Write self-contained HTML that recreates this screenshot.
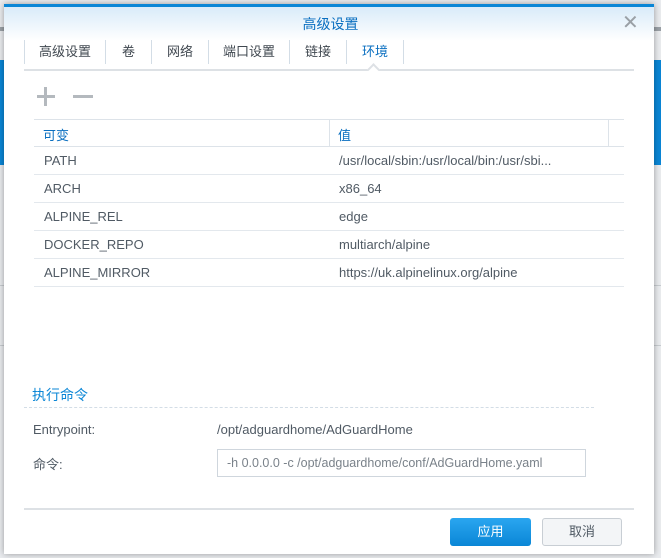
<!DOCTYPE html>
<html><head><meta charset="utf-8"><style>
*{margin:0;padding:0;box-sizing:border-box}
body{width:661px;height:558px;overflow:hidden;background:#e9ebee;font-family:"Liberation Sans","Noto Sans CJK SC",sans-serif;font-size:13px;color:#505a64;position:relative}
.a{position:absolute;white-space:nowrap}
.bgbar{position:absolute;left:0;right:0;top:27px;height:4px;background:#9aa0a6}
.bgblue{position:absolute;left:0;right:0;top:60px;height:105px;background:#0a86d6}
.bgline{position:absolute;left:0;right:0;height:1px;background:#c8ccd0}
.dlg{position:absolute;left:4px;top:4px;width:650px;height:550px;background:#fff;border-top:3px solid #0a86d6;box-shadow:0 0 6px rgba(0,0,0,.35)}
.hdr{position:absolute;left:4px;top:7px;width:650px;height:34px;background:linear-gradient(#d9ebf9,#fff)}
.sep{position:absolute;top:40px;height:24px;width:1px;background:#d3dde6}
.tab{position:absolute;top:43px;height:18px;line-height:18px;color:#404850;text-align:center}
.hl{position:absolute;height:1px;background:#e3e8ed}
.vl{position:absolute;width:1px;background:#dde3e9}
</style></head><body>
<div class="bgbar"></div><div class="bgblue"></div>
<div class="bgline" style="top:285px"></div><div class="bgline" style="top:345px"></div>
<div class="dlg"></div>
<div class="hdr"></div>
<div class="a" style="left:0;width:661px;text-align:center;top:14px;color:#0a6fc0;font-size:14px">高级设置</div>
<div class="a" style="left:622px;top:10px;color:#9aa0a6;font-size:20px">✕</div>
<div class="sep" style="left:24px"></div><div class="sep" style="left:105px"></div><div class="sep" style="left:151px"></div><div class="sep" style="left:208px"></div><div class="sep" style="left:289px"></div><div class="sep" style="left:346px"></div><div class="sep" style="left:403px"></div>
<div class="tab" style="left:25px;width:80px">高级设置</div>
<div class="tab" style="left:106px;width:45px">卷</div>
<div class="tab" style="left:152px;width:56px">网络</div>
<div class="tab" style="left:209px;width:80px">端口设置</div>
<div class="tab" style="left:290px;width:56px">链接</div>
<div class="tab" style="left:347px;width:56px;color:#0a6fc0">环境</div>
<div class="a" style="left:24px;top:69px;width:610px;height:2px;background:#dde1e5"></div>
<div class="a" style="left:369px;top:65px;width:9px;height:9px;background:#fff;border-left:2px solid #dde1e5;border-top:2px solid #dde1e5;transform:rotate(45deg)"></div>
<div class="a" style="left:37px;top:95px;width:18px;height:3px;background:#b4b9be"></div>
<div class="a" style="left:44px;top:87px;width:3px;height:19px;background:#b4b9be"></div>
<div class="a" style="left:73px;top:95px;width:20px;height:3px;background:#b4b9be"></div>
<div class="hl" style="left:34px;top:119px;width:590px;background:#dde3e9"></div>
<div class="hl" style="left:34px;top:146px;width:590px;background:#dde3e9"></div>
<div class="vl" style="left:329px;top:120px;height:26px"></div>
<div class="vl" style="left:608px;top:120px;height:26px"></div>
<div class="a" style="left:43px;top:125px;color:#0a6fc0">可变</div>
<div class="a" style="left:338px;top:125px;color:#0a6fc0">值</div>
<div class="a" style="left:44px;top:153px">PATH</div><div class="a" style="left:339px;top:153px">/usr/local/sbin:/usr/local/bin:/usr/sbi...</div>
<div class="hl" style="left:34px;top:174px;width:590px"></div>
<div class="a" style="left:44px;top:181px">ARCH</div><div class="a" style="left:339px;top:181px">x86_64</div>
<div class="hl" style="left:34px;top:202px;width:590px"></div>
<div class="a" style="left:44px;top:209px">ALPINE_REL</div><div class="a" style="left:339px;top:209px">edge</div>
<div class="hl" style="left:34px;top:230px;width:590px"></div>
<div class="a" style="left:44px;top:237px">DOCKER_REPO</div><div class="a" style="left:339px;top:237px">multiarch/alpine</div>
<div class="hl" style="left:34px;top:258px;width:590px"></div>
<div class="a" style="left:44px;top:265px">ALPINE_MIRROR</div><div class="a" style="left:339px;top:265px">https://uk.alpinelinux.org/alpine</div>
<div class="hl" style="left:34px;top:286px;width:590px"></div>
<div class="a" style="left:32px;top:385px;color:#0a86d6;font-size:14px">执行命令</div>
<div class="a" style="left:24px;top:407px;width:570px;border-top:1px dashed #d3dde6"></div>
<div class="a" style="left:33px;top:422px">Entrypoint:</div>
<div class="a" style="left:217px;top:422px">/opt/adguardhome/AdGuardHome</div>
<div class="a" style="left:33px;top:454px">命令:</div>
<div class="a" style="left:217px;top:449px;width:369px;height:28px;border:1px solid #cfd6dd;line-height:26px;padding-left:9px;color:#7a828a;overflow:hidden;font-size:12.5px">-h 0.0.0.0 -c /opt/adguardhome/conf/AdGuardHome.yaml</div>
<div class="a" style="left:24px;top:508px;width:610px;height:2px;background:#dde1e5"></div>
<div class="a" style="left:450px;top:518px;width:81px;height:28px;background:linear-gradient(#2aa6f0,#0a86d6);border-radius:3px;color:#fff;text-align:center;line-height:28px">应用</div>
<div class="a" style="left:542px;top:518px;width:80px;height:28px;background:#f3f5f7;border:1px solid #c8ced4;border-radius:3px;text-align:center;line-height:26px">取消</div>
</body></html>
